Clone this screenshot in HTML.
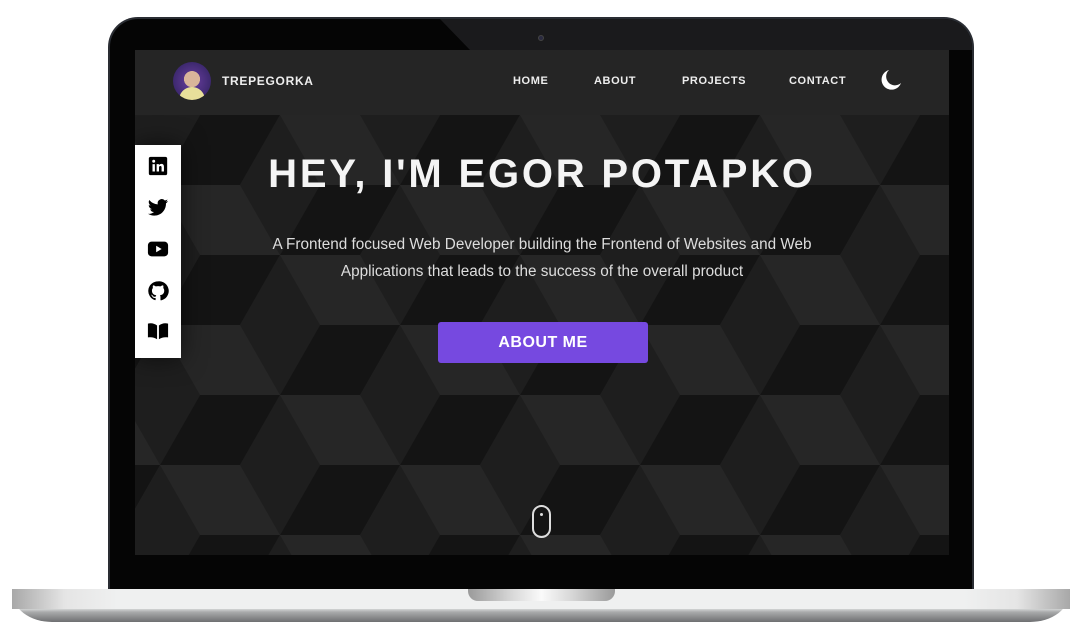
<!DOCTYPE html>
<html><head><meta charset="utf-8"><style>
*{margin:0;padding:0;box-sizing:border-box}
body{width:1080px;height:638px;background:#fff;position:relative;overflow:hidden;font-family:"Liberation Sans",sans-serif}
.body{position:absolute;left:108px;top:17px;width:866px;height:575px;background:#050505;border-radius:30px 30px 0 0;border:2px solid #2a2d33;border-bottom:none}
.gloss{position:absolute;left:440px;top:19px;width:532px;height:31px;background:#1a1a1c;clip-path:polygon(0 0,100% 0,100% 100%,30px 100%);border-top-right-radius:28px}
.cam{position:absolute;left:538px;top:35px;width:6px;height:6px;border-radius:50%;background:#2a2a40;border:1px solid #444}
.screen{position:absolute;left:135px;top:50px;width:814px;height:505px;overflow:hidden;background:#1d1d1d}
.nav{position:absolute;left:0;top:0;width:814px;height:65px;background:#252525;z-index:2}
.logo{position:absolute;left:38px;top:12px;width:38px;height:38px;border-radius:50%;background:radial-gradient(circle at 50% 45%,#d9b59a 0 28%,transparent 29%),radial-gradient(circle at 50% 100%,#e8df9a 0 30%,transparent 31%),radial-gradient(circle,#6a3fa0,#2a1f5a)}
.brand{position:absolute;left:87px;top:24px;color:#eee;font-weight:bold;font-size:12px;letter-spacing:.7px}
.nav a{position:absolute;top:25px;color:#eee;font-weight:bold;font-size:11px;letter-spacing:.6px;text-decoration:none}
.side{position:absolute;left:0;top:95px;width:46px;height:213px;background:#fff;z-index:2;box-shadow:0 0 25px rgba(0,0,0,.6)}
.side svg{position:absolute;left:12px;width:22px;height:22px}
h1{position:absolute;left:0;width:814px;top:102px;text-align:center;color:#f4f4f4;font-size:40px;font-weight:bold;letter-spacing:2.8px;z-index:1}
p{position:absolute;left:0;width:814px;top:181px;text-align:center;color:#ddd;font-size:15.3px;line-height:27px;z-index:1}
.btn{position:absolute;left:303px;top:272px;width:210px;height:41px;background:#7649e0;border-radius:3px;color:#fff;font-weight:bold;font-size:16px;letter-spacing:.5px;text-align:center;line-height:41px;z-index:1}
.mouse{position:absolute;left:397px;top:455px;width:19px;height:33px;border:2px solid #ddd;border-radius:10px;z-index:1}
.mouse:after{content:"";position:absolute;left:6px;top:6px;width:3px;height:3px;border-radius:50%;background:#ddd}
.base{position:absolute;left:12px;top:589px;width:1058px;height:33px;background:linear-gradient(#eef0f0 0,#eceeee 55%,#a9aaab 70%,#6e6f71 100%);border-radius:0 0 40px 40px/0 0 30px 30px}
.base:before{content:"";position:absolute;left:0;top:0;width:100%;height:20px;background:linear-gradient(90deg,#a8a8a8,#e5e5e5 5%,#eff0f0 10%,#eff0f0 90%,#e5e5e5 95%,#a8a8a8)}
.notch{position:absolute;left:468px;top:589px;width:147px;height:12px;border-radius:0 0 10px 10px;background:linear-gradient(90deg,#9a9a9a,#d8d8d8 30%,#fafafa 50%,#d8d8d8 70%,#9a9a9a)}
</style></head><body>
<div class="body"></div>
<div class="gloss"></div>
<div class="cam"></div>
<div class="screen">
<svg width="814" height="505" style="position:absolute;left:0;top:0">
<defs><pattern id="p" width="240" height="140" patternUnits="userSpaceOnUse" x="-15" y="-5">
<g id="h">
<polygon points="40,0 120,0 160,70 80,70" fill="#262626"/>
<polygon points="80,70 160,70 120,140 40,140" fill="#141414"/>
<polygon points="0,70 40,0 80,70 40,140" fill="#1e1e1e"/>
</g>
<use href="#h" x="120" y="70"/><use href="#h" x="120" y="-70"/><use href="#h" x="-120" y="70"/><use href="#h" x="-120" y="-70"/><use href="#h" x="240" y="0"/>
</pattern></defs>
<rect width="814" height="505" fill="url(#p)"/>
</svg>
<div class="nav">
<div class="logo"></div>
<div class="brand">TREPEGORKA</div>
<a style="left:378px">HOME</a><a style="left:459px">ABOUT</a><a style="left:547px">PROJECTS</a><a style="left:654px">CONTACT</a>
<svg style="position:absolute;left:744px;top:18px" width="24" height="24" viewBox="0 0 24 24"><path d="M10 2A10 10 0 1 0 22 15A8 8 0 0 1 10 2Z" fill="#fff"/></svg>
</div>
<div class="side">
<svg style="top:10px" viewBox="0 0 24 24"><rect x="2" y="2" width="20" height="20" rx="2"/><rect x="6" y="10" width="2.6" height="8" fill="#fff"/><circle cx="7.3" cy="6.8" r="1.6" fill="#fff"/><path d="M10.5 10h2.5v1.2c.6-1 1.6-1.5 2.8-1.5 2 0 2.7 1.3 2.7 3.5V18h-2.6v-4.3c0-1-.3-1.7-1.3-1.7s-1.5.7-1.5 1.7V18h-2.6z" fill="#fff"/></svg>
<svg style="top:52px" viewBox="0 0 24 24"><path d="M23 4.5a9 9 0 0 1-2.6.7 4.5 4.5 0 0 0 2-2.5 9 9 0 0 1-2.9 1.1A4.5 4.5 0 0 0 11.8 8 12.8 12.8 0 0 1 2.5 3.3a4.5 4.5 0 0 0 1.4 6 4.5 4.5 0 0 1-2-.6 4.5 4.5 0 0 0 3.6 4.5 4.5 4.5 0 0 1-2 .1 4.5 4.5 0 0 0 4.2 3.1A9 9 0 0 1 1 18.3 12.8 12.8 0 0 0 7.9 20.3c8.3 0 12.8-6.9 12.8-12.8v-.6A9 9 0 0 0 23 4.5z"/></svg>
<svg style="top:93px" viewBox="0 0 24 24"><rect x="1" y="4" width="22" height="16" rx="4"/><path d="M10 8.5v7l6-3.5z" fill="#fff"/></svg>
<svg style="top:135px" viewBox="0 0 24 24"><path d="M12 1.5A10.5 10.5 0 0 0 8.7 22c.5.1.7-.2.7-.5v-2c-2.9.6-3.5-1.3-3.5-1.3-.5-1.2-1.2-1.5-1.2-1.5-1-.6.1-.6.1-.6 1 .1 1.6 1.1 1.6 1.1.9 1.6 2.5 1.1 3.1.9.1-.7.4-1.1.7-1.4-2.3-.3-4.8-1.2-4.8-5.2 0-1.1.4-2.1 1.1-2.8-.1-.3-.5-1.3.1-2.8 0 0 .9-.3 2.9 1.1a10 10 0 0 1 5.2 0c2-1.4 2.9-1.1 2.9-1.1.6 1.5.2 2.5.1 2.8.7.7 1.1 1.7 1.1 2.8 0 4-2.5 4.9-4.8 5.2.4.3.7 1 .7 2v3c0 .3.2.6.7.5A10.5 10.5 0 0 0 12 1.5z"/></svg>
<svg style="top:175px" viewBox="0 0 24 24"><path d="M1 4c4-1 7 0 10 2v15c-3-2-6-2.5-10-2zM23 4c-4-1-7 0-10 2v15c3-2 6-2.5 10-2z"/></svg>
</div>
<h1>HEY, I'M EGOR POTAPKO</h1>
<p>A Frontend focused Web Developer building the Frontend of Websites and Web<br>Applications that leads to the success of the overall product</p>
<div class="btn">ABOUT ME</div>
<div class="mouse"></div>
</div>
<div class="base"></div>
<div class="notch"></div>
</body></html>
